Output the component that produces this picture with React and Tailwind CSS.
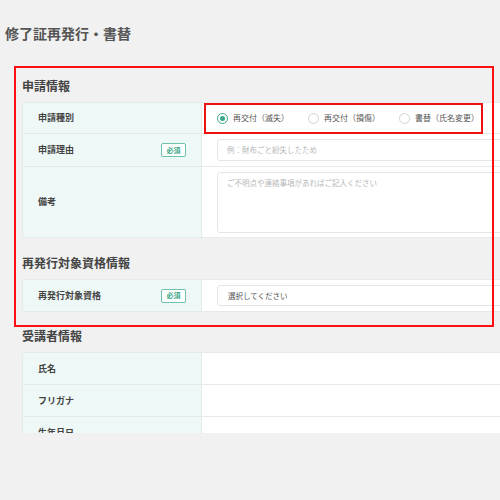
import React from 'react';

const font = "font-['Noto_Sans_CJK_JP','Noto_Sans',sans-serif]";

function Badge() {
  return (
    <span className="inline-flex h-[14px] w-[25px] items-center justify-center rounded-[2px] border border-[#6cc3aa] text-[7px] font-bold text-[#3aa88a] bg-white">
      必須
    </span>
  );
}

function Row({ label, required, height = 'h-[32px]', last, children }) {
  return (
    <div className={`flex ${height} ${last ? '' : 'border-b border-[#e6eaea]'}`}>
      <div className="flex w-[179px] shrink-0 items-center justify-between bg-[#eef8f6] pl-[15px] pr-[15px] border-r border-[#e6eaea]">
        <span className="text-[9px] font-bold text-[#444]">{label}</span>
        {required && <Badge />}
      </div>
      <div className="relative flex flex-1 items-center bg-white pl-[15px]">{children}</div>
    </div>
  );
}

function Radio({ label, checked }) {
  return (
    <label className="flex items-center gap-[5px]">
      <span
        className={`flex h-[11px] w-[11px] items-center justify-center rounded-full border ${
          checked ? 'border-[#3aa88a]' : 'border-[#cfd3d3]'
        } bg-white`}
      >
        {checked && <span className="h-[5px] w-[5px] rounded-full bg-[#3aa88a]" />}
      </span>
      <span className="text-[8px] text-[#555]">{label}</span>
    </label>
  );
}

function Table({ children }) {
  return <div className="w-[530px] overflow-hidden rounded-[2px] border border-[#e6eaea]">{children}</div>;
}

function Heading({ children }) {
  return <h2 className="h-[16px] text-[12px] font-bold leading-[16px] text-[#444]">{children}</h2>;
}

export default function App() {
  return (
    <div className={`${font} relative h-[500px] w-[500px] overflow-hidden bg-[#f0f1f0]`}>
      <div className="h-[433px] overflow-hidden">
        <h1 className="pl-[5px] pt-[23px] text-[14px] font-bold leading-[20px] text-[#555]">修了証再発行・書替</h1>

        <div className="pl-[22px] pt-[35px]">
          <Heading>申請情報</Heading>
          <div className="mt-[8px]">
            <Table>
              <Row label="申請種別" height="h-[31px]">
                <div className="flex items-center gap-[19px]">
                  <Radio label="再交付（滅失）" checked />
                  <Radio label="再交付（損傷）" />
                  <Radio label="書替（氏名変更）" />
                </div>
                <div className="absolute left-[2px] top-0 h-[31px] w-[279px] border-[2.5px] border-[#ee1111]" />
              </Row>
              <Row label="申請理由" required height="h-[33px]">
                <div className="flex h-[22px] w-[320px] items-center rounded-[3px] border border-[#e3e6e8] px-[9px] text-[7.5px] text-[#b5b8ba]">
                  例：財布ごと紛失したため
                </div>
              </Row>
              <Row label="備考" height="h-[70px]" last>
                <div className="h-[61px] w-[320px] rounded-[3px] border border-[#e3e6e8] px-[9px] pt-[4px] text-[7.5px] text-[#b5b8ba]">
                  ご不明点や連絡事項があればご記入ください
                </div>
              </Row>
            </Table>
          </div>

          <div className="pt-[17px]">
            <Heading>再発行対象資格情報</Heading>
          </div>
          <div className="mt-[8px]">
            <Table>
              <Row label="再発行対象資格" required height="h-[31px]" last>
                <div className="flex h-[21px] w-[320px] items-center rounded-[3px] border border-[#e3e6e8] px-[10px] text-[7.5px] text-[#555]">
                  選択してください
                </div>
              </Row>
            </Table>
          </div>

          <div className="pt-[16px]">
            <Heading>受講者情報</Heading>
          </div>
          <div className="mt-[8px]">
            <Table>
              <Row label="氏名" height="h-[32px]" />
              <Row label="フリガナ" height="h-[32px]" />
              <Row label="生年月日" height="h-[32px]" last />
            </Table>
          </div>
        </div>
      </div>

      <div className="pointer-events-none absolute left-[14px] top-[66px] h-[261px] w-[480px] border-[2px] border-[#ff0f0f]" />
    </div>
  );
}
